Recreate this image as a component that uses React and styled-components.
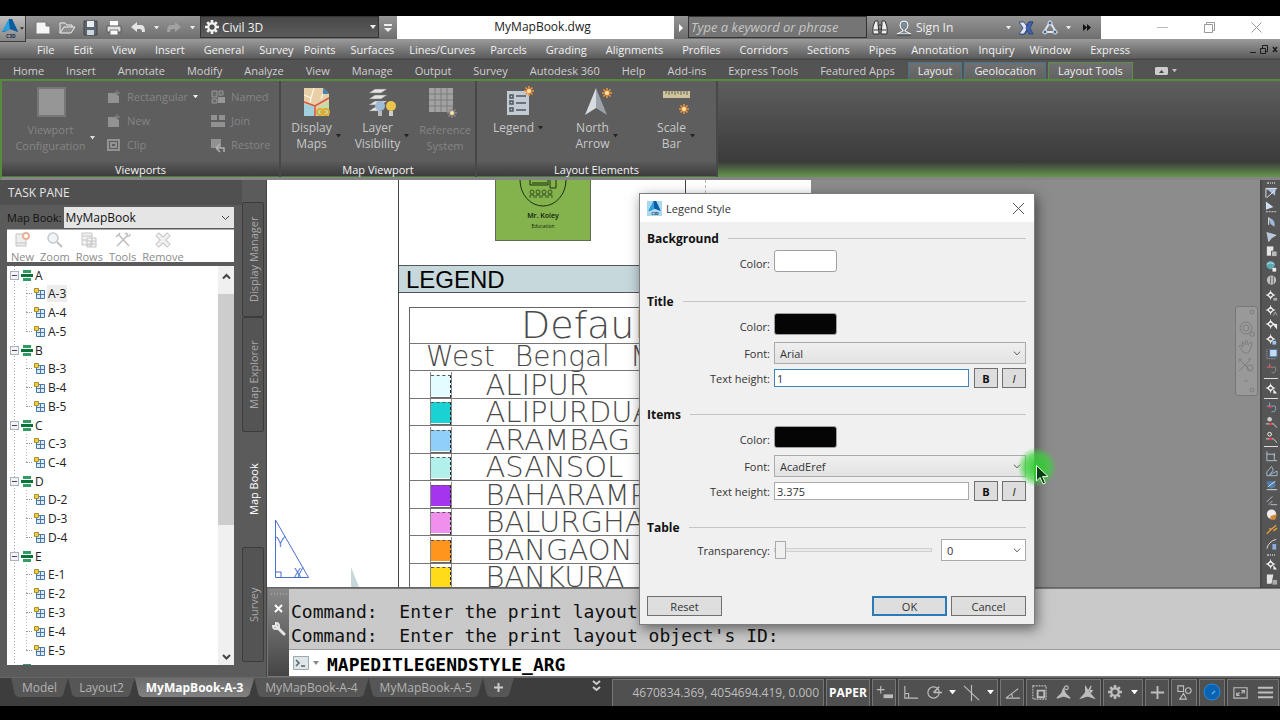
import React from 'react';
import styled, { createGlobalStyle, css } from 'styled-components';

const GlobalStyle = createGlobalStyle`
    * { box-sizing: border-box; }
    body {
        margin: 0;
        background: #000;
        font-family: "Open Sans", "Noto Sans", sans-serif;
        font-size: 12px;
        overflow: hidden;
    }
    button, input, select {
        font: inherit;
        color: inherit;
        margin: 0;
    }
    button {
        padding: 0;
        border: 0;
        background: none;
        white-space: nowrap;
    }
    svg { display: block; flex: none; }
`;

const Screen = styled.div`
    display: flex;
    flex-direction: column;
    height: 100vh;
    padding: 16px 0 14px;
    background: #000;
`;

/* ---------- title bar ---------- */

const TitleBar = styled.header`
    display: flex;
    height: 23px;
    background: linear-gradient(#959595, #6e6e6e);
    color: #fff;
`;

const AppButton = styled.button`
    display: flex;
    align-items: center;
    width: 26px;
    height: 26px;
    z-index: 1;
    background: linear-gradient(#bdbdbd, #878787);
    border-right: 1px solid #3c3c3c;
    border-bottom: 1px solid #3c3c3c;
`;

const QuickAccess = styled.div`
    display: flex;
    align-items: center;
    justify-content: space-between;
    width: 174px;
    padding: 0 5px 0 9px;
`;

const Workspace = styled.div`
    display: flex;
    align-items: center;
    width: 179px;
    height: 22px;
    padding: 0 2px 0 4px;
    gap: 3px;
    background: linear-gradient(#474747, #5c5c5c);
    border: 1px solid #333;
`;

const WorkspaceSelect = styled.select`
    flex: 1;
    appearance: none;
    border: 0;
    background: none;
    color: #f2f2f2;
`;

const BarButton = styled.button`
    display: flex;
    align-items: center;
    justify-content: center;
    width: ${props => props.$wide ? '18px' : '14px'};
`;

const FileName = styled.div`
    flex: 1;
    background: #fff;
    color: #222;
    text-align: center;
    line-height: 22px;
    padding-left: 14px;
`;

const SearchInput = styled.input`
    width: 179px;
    height: 22px;
    padding: 0 2px;
    border: 1px solid #333;
    background: #757575;
    font-style: italic;
    font-size: 13px;
    &::placeholder { color: #c6c6c6; opacity: 1; }
`;

const InfoCenter = styled.div`
    display: flex;
    align-items: center;
    width: 234px;
    padding: 0 5px;
    gap: 8px;
    color: #eee;
`;

const SignIn = styled.button`
    display: flex;
    align-items: center;
    gap: 4px;
    width: 106px;
`;

const WindowButtons = styled.div`
    display: flex;
    justify-content: space-around;
    align-items: center;
    width: 179px;
    padding-left: 38px;
    background: #fff;
    color: #999;
`;

/* ---------- menus and ribbon tabs ---------- */

const MenuBar = styled.nav`
    display: flex;
    align-items: center;
    height: 21px;
    padding: 0 2px 0 37px;
    background: linear-gradient(#9b9b9b, #5d5d5d 90%, #3c3c3c);
    color: #f1f1f1;
`;

const menuGaps = { small: '10px', medium: '15px', large: '19px' };

const MenuItem = styled.button`
    margin-right: ${props => menuGaps[props.$gap]};
    font-size: 11px;
`;

const DocButtons = styled.div`
    display: flex;
    gap: 3px;
    margin-left: auto;
    color: #1d1d1d;
`;

const TabBar = styled.nav`
    display: flex;
    align-items: flex-end;
    height: 19px;
    padding-left: 2px;
    background: #535353;
    color: #cfcfcf;
`;

const RibbonTab = styled.button`
    height: 17px;
    padding: 0 11px;
    font-size: 11px;
    line-height: 17px;
    ${props => props.$tone && css`
        margin-left: 2px;
        padding: 0 9px;
        line-height: 16px;
        color: #eee;
        border: 1px solid ${props.$tone};
        border-bottom: 0;
        background: linear-gradient(#707070, #626262);
    `}
`;

const RibbonToggle = styled.button`
    display: flex;
    align-items: center;
    height: 17px;
    margin-left: 22px;
    gap: 4px;
`;

const Ribbon = styled.section`
    display: flex;
    height: 101px;
    border-top: 2px solid #568a3d;
    border-left: 2px solid #568a3d;
    border-bottom: 3px solid #858585;
    background: linear-gradient(#5e5e5e, #3b3b3b 84%, #65974c);
    color: #c3c3c3;
`;

const Panel = styled.div`
    display: flex;
    flex-direction: column;
    width: ${props => props.$width};
    border-right: 2px solid #484848;
    background: #5e5e5e;
`;

const PanelBody = styled.div`
    display: flex;
    flex: 1;
    padding: 6px 0 0 2px;
`;

const PanelTitle = styled.div`
    height: 15px;
    font-size: 11px;
    line-height: 15px;
    text-align: center;
    color: #f3f3f3;
    background: linear-gradient(#5a5a5a, #3c3c3c);
    border-bottom: 1px solid #4b7b38;
`;

const BigButton = styled.button`
    display: flex;
    flex-direction: column;
    align-items: center;
    width: ${props => props.$width};
    gap: ${props => props.$low ? '5px' : '3px'};
    font-size: ${props => props.disabled ? '11px' : '12px'};
    line-height: 16px;
    color: ${props => props.disabled ? '#858585' : '#c8c8c8'};
    > svg { margin-right: ${props => props.disabled ? '8px' : '0'}; }
`;

const BigLabel = styled.span`
    display: flex;
    align-items: center;
    gap: 4px;
`;

const SmallColumn = styled.div`
    display: flex;
    flex-direction: column;
    width: ${props => props.$width};
`;

const SmallButton = styled.button`
    display: flex;
    align-items: center;
    gap: 5px;
    height: 24px;
    padding-bottom: 5px;
    font-size: 11px;
    color: #858585;
`;

/* ---------- workspace ---------- */

const Main = styled.main`
    display: flex;
    flex: 1;
    min-height: 0;
    background: #5b5b5b;
`;

const TaskPane = styled.aside`
    display: flex;
    flex-direction: column;
    width: 242px;
    padding: 0 8px 12px 7px;
`;

const PaneTitle = styled.h1`
    margin: 0 -8px 0 -7px;
    padding-left: 8px;
    height: 25px;
    font-size: 12px;
    font-weight: 400;
    line-height: 25px;
    color: #e6e6e6;
    background: #505050;
`;

const BookRow = styled.div`
    display: flex;
    align-items: center;
    height: 24px;
    gap: 2px;
    color: #111;
    white-space: nowrap;
    label { font-size: 11px; }
`;

const BookSelectBox = styled.div`
    display: flex;
    align-items: center;
    flex: 1;
    height: 21px;
    padding: 0 4px 0 2px;
    background: #e5e5e5;
`;

const PlainSelect = styled.select`
    flex: 1;
    min-width: 0;
    appearance: none;
    border: 0;
    outline: 0;
    padding: 0;
    background: none;
`;

const PaneTools = styled.div`
    display: flex;
    gap: 6px;
    height: 33px;
    padding: 2px 4px 0;
    background: #fff;
    border-top: 1px solid #aaa;
    color: #8b8b8b;
`;

const PaneTool = styled.button`
    display: flex;
    flex-direction: column;
    align-items: center;
    gap: 2px;
    font-size: 11px;
    line-height: 14px;
    color: #8b8b8b;
`;

const TreeBox = styled.div`
    display: flex;
    flex: 1;
    min-height: 0;
    margin-top: 4px;
    background: #fff;
    overflow: hidden;
`;

const Tree = styled.ul`
    flex: 1;
    margin: 0;
    padding: 0 0 0 3px;
    list-style: none;
    color: #222;
    background: repeating-linear-gradient(#aaa 0 1px, transparent 1px 3px) 7px 0 / 1px 100% no-repeat;
`;

const TreeHead = styled.div`
    display: flex;
    align-items: center;
    gap: 2px;
    height: 18px;
`;

const Expander = styled.button`
    display: grid;
    place-items: center;
    width: 9px;
    height: 9px;
    border: 1px solid #a9b0bf;
    background: #f1f3f7;
`;

const Leaves = styled.ul`
    margin: 0 0 0 16px;
    padding: 0;
    list-style: none;
    background: repeating-linear-gradient(#bbb 0 1px, transparent 1px 3px) 0 0 / 1px calc(100% - 9px) no-repeat;
`;

const Leaf = styled.li`
    display: flex;
    align-items: center;
    height: 19px;
    gap: 2px;
    &::before {
        content: "";
        width: 6px;
        border-top: 1px dotted #999;
    }
`;

const LeafName = styled.button`
    padding: 0 1px;
    line-height: 17px;
    background: ${props => props.$selected ? '#ededed' : 'none'};
`;

const Scrollbar = styled.div`
    display: flex;
    flex-direction: column;
    align-items: center;
    width: 16px;
    background: #f0f0f0;
    color: #444;
`;

const ScrollButton = styled.button`
    height: 28px;
    padding-bottom: 8px;
    &:last-child { margin-top: auto; height: 18px; padding: 0; }
`;

const Thumb = styled.div`
    width: 100%;
    height: 58%;
    background: #cdcdcd;
`;

const SideTabs = styled.div`
    display: flex;
    flex-direction: column;
    width: 25px;
    padding: 22px 2px 15px 0;
    border-right: 1px solid #444;
`;

const SideTab = styled.button`
    flex: 1;
    writing-mode: vertical-rl;
    transform: rotate(180deg);
    border: 1px solid ${props => props.$active ? 'transparent' : '#3c3c3c'};
    border-radius: 2px;
    font-size: 11px;
    color: ${props => props.$active ? '#fff' : '#a8a8a8'};
    background: ${props => props.$active ? 'none' : '#545454'};
`;

const Work = styled.div`
    display: flex;
    flex: 1;
    flex-direction: column;
    min-width: 0;
`;

const CanvasRow = styled.div`
    display: flex;
    flex: 1;
    min-height: 0;
`;

const Canvas = styled.div`
    position: relative;
    flex: 1;
    background: #8c8c8c;
    overflow: hidden;
    border-bottom: 1px solid #666;
`;

const Sheet = styled.div`
    display: flex;
    width: 544px;
    height: 100%;
    background: #fff;
    overflow: hidden;
`;

const SheetMargin = styled.div`
    position: relative;
    width: 132px;
    border-right: 1px solid #444;
`;

const SheetBody = styled.div`
    flex: 1;
    height: 100%;
    overflow: hidden;
`;

const SheetTop = styled.div`
    display: flex;
    height: 85px;
    padding-left: 96px;
`;

const Stamp = styled.div`
    display: flex;
    flex-direction: column;
    align-items: center;
    width: 96px;
    height: 61px;
    background: #84b24d;
    border: 1px solid #5f6b55;
    border-top: 0;
    line-height: 11px;
    color: #10200a;
`;

const StampName = styled.span`
    margin-top: 2px;
    font-size: 7px;
    font-weight: 600;
`;

const StampRole = styled.span`
    font-size: 5px;
`;

const Guide = styled.div`
    width: 20px;
    height: 100%;
    margin-left: ${props => props.$far ? '0' : '94px'};
    border-left: 1px ${props => props.$far ? 'dashed #bbb' : 'solid #444'};
`;

const LegendBand = styled.h2`
    height: 28px;
    margin: 0 0 14px;
    padding-left: 7px;
    border: 1px solid #555;
    border-left: 0;
    background: #c6d8dc;
    font-family: "Liberation Sans", Arial, sans-serif;
    font-size: 24px;
    font-weight: 400;
    line-height: 28px;
    color: #000;
`;

const LegendTable = styled.table`
    width: 380px;
    margin-left: 10px;
    border-collapse: collapse;
    border: 1px solid #666;
    font-family: "DejaVu Sans", sans-serif;
    font-weight: 200;
    font-size: 29px;
    line-height: 26px;
    color: #4a4a4a;
    white-space: nowrap;
    th, td { padding: 0; }
`;

const LegendTitle = styled.th`
    height: 36px;
    font-size: 38px;
    font-weight: 200;
    line-height: 35px;
    text-align: left;
    && { padding-left: 111px; }
`;

const LegendSub = styled.th`
    font-size: 28px;
    font-weight: 200;
    text-align: left;
    && { padding-left: 16px; }
`;

const SubWords = styled.span`
    display: flex;
    gap: 20px;
`;

const LegendRow = styled.tr`
    height: ${props => props.$tall ? '28px' : '27px'};
    border-top: 1px solid #777;
`;

const SwatchCell = styled.td`
    width: 76px;
    && { padding-left: 20px; }
`;

const Swatch = styled.div`
    width: 22px;
    height: 26px;
    padding: 3px 0 2px;
    border-left: 1px solid #8a8a8a;
    border-right: 1px solid #8a8a8a;
    background: ${props => props.$color} content-box;
    &::after {
        content: "";
        display: block;
        height: 100%;
        border-top: 1px dashed #555;
        border-right: 1px dashed #222;
        border-bottom: 1px solid #666;
    }
`;

const CoordMark = styled.svg`
    position: absolute;
    left: 7px;
    bottom: 8px;
`;

const PaperCorner = styled.svg`
    position: absolute;
    right: 39px;
    bottom: 0;
`;

const NavBar = styled.div`
    position: absolute;
    right: 2px;
    top: 126px;
    width: 23px;
    height: 90px;
    border: 1px solid #777;
    border-radius: 3px;
    background: #999;
    color: #808080;
    display: flex;
    flex-direction: column;
    align-items: center;
    justify-content: space-between;
    padding: 2px 0;
`;

const ToolStrip = styled.div`
    display: flex;
    flex-direction: column;
    width: 20px;
    background: #555;
    border-left: 2px solid #494949;
    border-bottom: 1px solid #484848;
`;

const StripButton = styled.button`
    display: grid;
    place-items: center;
    flex: 1;
    min-height: 0;
    overflow: hidden;
`;

const StripLine = styled.div`
    height: 1px;
    margin: 2px 2px;
    background: #ddd;
`;

const Grip = styled.div`
    height: 2px;
    margin: 2px 5px;
    border-top: 1px dotted #aaa;
    border-bottom: 1px dotted #aaa;
`;

/* ---------- command line ---------- */

const CommandWindow = styled.section`
    display: flex;
    height: 89px;
    border: 1px solid #777;
    border-right: 0;
`;

const CommandSide = styled.div`
    display: flex;
    flex-direction: column;
    align-items: center;
    gap: 9px;
    width: 21px;
    padding-top: 4px;
    background: linear-gradient(#888, #454545);
    color: #fff;
`;

const CommandBody = styled.div`
    flex: 1;
    display: flex;
    flex-direction: column;
    font-family: "DejaVu Sans Mono", "Liberation Mono", monospace;
    font-size: 18px;
    color: #101010;
`;

const History = styled.div`
    flex: 1;
    padding: 11px 2px 0;
    background: #c9c9c9;
    line-height: 24px;
    white-space: pre;
    border-bottom: 1px solid #999;
`;

const Prompt = styled.div`
    display: flex;
    align-items: center;
    gap: 4px;
    height: 26px;
    padding-left: 4px;
    background: #fff;
`;

const PromptInput = styled.input`
    flex: 1;
    height: 26px;
    padding: 2px 4px 0;
    border: 0;
    outline: 0;
    background: none;
    font-weight: 700;
    color: #000;
`;

/* ---------- bottom bar ---------- */

const BottomBar = styled.footer`
    display: flex;
    height: 29px;
    background: #3d3d3d;
    border-top: 1px solid #666;
    color: #a9a9a9;
`;

const LayoutTabs = styled.div`
    display: flex;
    flex: 1;
    align-items: flex-start;
    padding-left: 11px;
`;

const LayoutTab = styled.button`
    height: 19px;
    padding: 0 11px;
    line-height: 19px;
    font-size: 12px;
    background: ${props => props.$active ? 'linear-gradient(#6d6d6d, #818181)' : '#565656'};
    color: ${props => props.$active ? '#fff' : '#b2b2b2'};
    font-weight: ${props => props.$active ? 700 : 400};
    clip-path: polygon(0 0, 100% 0, calc(100% - 5px) 90%, calc(100% - 8px) 100%, 7px 100%, 4px 90%);
`;

const MoreTabs = styled.button`
    margin: 2px 10px 0 auto;
`;

const StatusCell = styled.div`
    display: flex;
    align-items: center;
    justify-content: space-around;
    width: ${props => props.$width};
    margin: 1px 1px 0;
    padding-bottom: 2px;
    border: 1px solid #777;
    border-bottom: 0;
    background: #505050;
    color: ${props => props.$bright ? '#fff' : '#bdbdbd'};
    font-weight: ${props => props.$bright ? 700 : 400};
`;

const Coordinates = styled(StatusCell)`
    justify-content: flex-end;
    padding-right: 4px;
`;

/* ---------- dialog ---------- */

const Dialog = styled.div`
    position: absolute;
    left: 639px;
    top: 193px;
    width: 396px;
    border: 1px solid #7d7d7d;
    background: #f0f0f0;
    box-shadow: 2px 4px 12px rgba(0, 0, 0, 0.5);
    font-size: 11px;
    color: #333;
`;

const DialogTitle = styled.div`
    display: flex;
    align-items: center;
    gap: 4px;
    height: 28px;
    padding: 0 9px 0 7px;
    background: #fff;
`;

const CloseButton = styled.button`
    margin-left: auto;
`;

const DialogBody = styled.div`
    padding: 6px 8px 8px 7px;
`;

const Section = styled.fieldset`
    margin: 0;
    padding: 0 0 12px;
    border: 0;
    min-width: 0;
`;

const SectionTitle = styled.div`
    display: flex;
    align-items: center;
    gap: 9px;
    height: 20px;
    margin-bottom: 2px;
    font-size: 12px;
    font-weight: 700;
    color: #111;
    &::after {
        content: "";
        flex: 1;
        border-top: 1px solid #c4c4c4;
    }
`;

const Field = styled.div`
    display: flex;
    align-items: center;
    gap: 4px;
    height: 22px;
    margin-bottom: ${props => props.$swatch ? '7px' : '3px'};
    label { padding-top: ${props => props.$swatch ? '4px' : '0'}; }
`;

const FieldLabel = styled.label`
    width: 123px;
    text-align: right;
`;

const ColorButton = styled.button`
    width: 63px;
    height: 22px;
    border: 1px solid #a0a0a0;
    border-radius: 3px;
    background: ${props => props.$color};
`;

const Combo = styled.div`
    display: flex;
    align-items: center;
    flex: ${props => props.$small ? 'none' : 1};
    width: ${props => props.$small ? '85px' : 'auto'};
    height: 22px;
    margin-left: ${props => props.$small ? '5px' : 0};
    padding: 0 4px 0 5px;
    border: 1px solid #aaa;
    background: ${props => props.$small ? '#fff' : 'linear-gradient(#efefef, #e3e3e3)'};
`;

const HeightInput = styled.input`
    flex: 1;
    min-width: 0;
    height: 18px;
    padding: 0 2px;
    border: 1px solid ${props => props.$focused ? '#3b86bd' : '#aaa'};
    outline: 0;
    background: #fff;
`;

const StyleButton = styled.button`
    width: 24px;
    height: 20px;
    margin-left: ${props => props.$first ? '1px' : 0};
    border: 1px solid #707070;
    background: #ddd;
    font-weight: ${props => props.$first ? 700 : 400};
    font-style: ${props => props.$first ? 'normal' : 'italic'};
    color: #111;
`;

const Range = styled.input`
    flex: 1;
    min-width: 0;
    height: 18px;
    appearance: none;
    background: none;
    &::-webkit-slider-runnable-track {
        height: 4px;
        border: 1px solid #d0d0d0;
        background: #e9e9e9;
    }
    &::-webkit-slider-thumb {
        appearance: none;
        width: 11px;
        height: 18px;
        margin-top: -8px;
        border: 1px solid #aaa;
        background: #f0f0f0;
    }
`;

const Actions = styled.div`
    display: flex;
    gap: 4px;
    margin-top: 20px;
`;

const ActionButton = styled.button`
    width: 75px;
    height: 20px;
    border: ${props => props.$primary ? '2px solid #2a7ab8' : '1px solid #707070'};
    background: #dedede;
    &:first-child { margin-right: auto; }
`;

const Pointer = styled.div`
    position: absolute;
    left: 1017px;
    top: 447px;
    width: 40px;
    height: 40px;
    border-radius: 50%;
    background: radial-gradient(rgba(50, 205, 50, 0.9) 15%, rgba(60, 210, 60, 0.7) 45%, rgba(60, 210, 60, 0) 70%);
    pointer-events: none;
    svg { margin: 18px 0 0 19px; overflow: visible; }
`;

/* ---------- drawings ---------- */

const Caret = ({ color = '#eee', size = 6 }) => (
    <svg width={size} height={size / 2 + 1} viewBox="0 0 6 4"><path d="M0 0H6L3 4Z" fill={color} /></svg>
);

const Chevron = ({ up, color = '#444', size = 9 }) => (
    <svg width={size} height={size} viewBox="0 0 9 9" fill="none" stroke={color} strokeWidth={up === undefined ? 1 : 2}>
        <path d={up ? 'M1 6.500L4.500 3L8 6.500' : 'M1 3L4.500 6.500L8 3'} />
    </svg>
);

const Logo = ({ size = 20, boxed }) => (
    <svg width={size} height={size} viewBox="0 0 20 20">
        {boxed && <path d="M0 0H20V20H0Z" fill="#a8d8ef" />}
        <path d="M9 0H12L18 13L13 11L10 10L4 13H2Z" fill="#0b68ad" />
        <path d="M9 0L2 13L10 10Z" fill="#2ba1df" />
        <path d="M9 0L10 10L18 13L12 0Z" fill="#0c5b9e" />
        <text x="6" y="19" fontSize="5" fontWeight="700" fill="#14304a">C3D</text>
    </svg>
);

const Spark = ({ x, y, color = '#f0953c' }) => (
    <g transform={`translate(${x} ${y})`} stroke={color} strokeWidth="1.500">
        <path d="M-5 0H5M0 -5V5M-3.500 -3.500L3.500 3.500M-3.500 3.500L3.500 -3.500" />
        <circle r="2" fill="#ffe3a0" stroke="none" />
    </g>
);

const quickIcons = {
    new: <path d="M1 2H11L15 6V14H1Z M11 2V6H15" fill="#f5f5f5" stroke="#777" />,
    open: <path d="M1 13V3H6L8 5H13V7M1 13L5 7H16L12 13Z" fill="#8e8e8e" stroke="#eee" />,
    save: <><path d="M2 1H15V15H2Z" fill="#5d6670" stroke="#444" /><path d="M5 1H12V7H5Z" fill="#e9eef2" /><path d="M5 10H12V15H5Z" fill="#ccd6de" /></>,
    print: <><path d="M4 1H12V6H4Z" fill="#fff" /><path d="M1 6H15V12H1Z" fill="#e2e2e2" stroke="#555" /><path d="M4 10H12V15H4Z" fill="#fafafa" stroke="#777" /></>,
    undo: <path d="M1 7L7 2V5H12Q15 6 15 12H12Q12 9 10 9H7V12Z" fill="#e4e4e4" />,
    redo: <path d="M15 7L9 2V5H4Q1 6 1 12H4Q4 9 6 9H9V12Z" fill="#a2a2a2" />,
};

const QuickIcon = ({ name }) => <svg width="16" height="16" viewBox="0 0 16 16">{quickIcons[name]}</svg>;

const Gear = ({ size = 14, color = '#f2f2f2', hole = '#4c4c4c' }) => (
    <svg width={size} height={size} viewBox="-8 -8 16 16">
        <path d="M0 -8V8M-8 0H8M-5.500 -5.500L5.500 5.500M-5.500 5.500L5.500 -5.500" stroke={color} strokeWidth="3" />
        <circle r="5.500" fill={color} />
        <circle r="3" fill={hole} />
    </svg>
);

const smallIcons = {
    page: <><path d="M2 4H9L13 7V14H2Z" fill="#929292" /><path d="M11 1V7M8 4H14" stroke="#888" /></>,
    clip: <path d="M2 3H13V13H2ZM5 6H10V10H5Z" fill="none" stroke="#929292" strokeWidth="2" />,
    named: <><path d="M2 2H7V8H2ZM2 10H7V14H2ZM9 2H13V6H9Z" fill="#6a6a6a" stroke="#979797" /><path d="M8 8H15V14H8Z" fill="#979797" /></>,
    join: <path d="M1 2H7V7H1ZM9 2H15V7H9ZM1 9H15V14H1Z" fill="#919191" />,
    restore: <><path d="M1 2H11V11H1Z" fill="#929292" /><path d="M6 11H14V15M6 11L10 7M6 11L10 15" fill="none" stroke="#b0b0b0" strokeWidth="1.500" /></>,
};

const SmallIcon = ({ name }) => <svg width="16" height="16" viewBox="0 0 16 16">{smallIcons[name]}</svg>;

const bigIcons = {
    viewport: <path d="M2 1H29V29H2Z" fill="#969696" stroke="#777" strokeWidth="2" />,
    maps: (
        <>
            <path d="M3 1H22L28 7V29H3Z" fill="#e8cfa6" />
            <path d="M3 17L12 19L15 29H3Z" fill="#9fd0dc" />
            <path d="M18 19L28 15V29H14Z" fill="#c6dca6" />
            <path d="M22 1V7H28Z" fill="#3f82bd" />
            <path d="M3 8L10 11L13 1M10 11L9 16M20 12L22 7" fill="none" stroke="#fff" />
            <path d="M3 15L14 19L28 11M14 19V29" fill="none" stroke="#cf5546" strokeWidth="1.500" />
            <path d="M16 25a3 3 0 1 1 6 0a3 3 0 1 1 -6 0M22 25a3 3 0 1 0 6 0a3 3 0 1 0 -6 0M19 25H25" fill="none" stroke="#dfab35" strokeWidth="2" />
        </>
    ),
    layers: (
        <>
            <path d="M8 2H20L14 6H2ZM8 8H20L14 12H2ZM8 14H20L14 18H2ZM8 20H15L12 24H2Z" fill="#e4e4e4" stroke="#777" strokeWidth=".5" />
            <circle cx="13" cy="19" r="5" fill="#9fbbd6" /><path d="M11 24H15V29H11Z" fill="#bbb" />
            <circle cx="24" cy="19" r="5" fill="#ecc64c" /><path d="M22 24H26V29H22Z" fill="#ccc" />
        </>
    ),
    grid: (
        <>
            <path d="M3 1H27V25H3Z" fill="#a2a2a2" />
            <path d="M9 1V25M15 1V25M21 1V25M3 7H27M3 13H27M3 19H27" stroke="#7d7d7d" />
            <Spark x={26} y={26} color="#8b8b8b" />
        </>
    ),
    legend: (
        <>
            <path d="M4 4H26V28H4Z" fill="#c2cbd3" />
            <path d="M7 8H10V11H7ZM7 14H10V17H7ZM7 21H10V24H7ZM13 9H23M13 16H23M13 23H23" fill="none" stroke="#4d565e" strokeWidth="1.500" />
            <Spark x={26} y={4} />
        </>
    ),
    north: (
        <>
            <path d="M14 1L25 28L14 21Z" fill="#9ba2aa" />
            <path d="M14 1L3 28L14 21Z" fill="#d7dce1" />
            <Spark x={25} y={6} />
        </>
    ),
    scale: (
        <>
            <path d="M2 4H29V11H2Z" fill="#cfc39b" />
            <path d="M5 4V7M8 4V8M11 4V7M14 4V8M17 4V7M20 4V8M23 4V7M26 4V8" stroke="#665" />
            <Spark x={23} y={22} />
        </>
    ),
};

const BigIcon = ({ name }) => <svg width="31" height="30" viewBox="0 0 31 30" overflow="visible">{bigIcons[name]}</svg>;

const paneIcons = {
    New: <><path d="M2 2H12V14H2ZM2 11H12" fill="#eee" stroke="#c4c4c4" /><circle cx="12" cy="4" r="3" fill="#fff" stroke="#eab29a" strokeWidth="2" /></>,
    Zoom: <><circle cx="6" cy="6" r="5" fill="#f1f5f7" stroke="#c3cace" strokeWidth="1.500" /><path d="M10 10L15 15" stroke="#c0c0c0" strokeWidth="2" /></>,
    Rows: <path d="M1 1H11V13H1ZM1 4H11M1 8H6M6 6H15V15H6ZM6 9H15M6 12H15M10 9V15" fill="#f1f3f5" stroke="#c6c6c6" />,
    Tools: <path d="M2 14L12 4M4 3L14 14M1 5L5 1M10 2Q13 0 12 4Q15 5 15 2" fill="none" stroke="#bebebe" strokeWidth="1.500" />,
    Remove: <><path d="M2 2L14 14M14 2L2 14" stroke="#c4c4c4" strokeWidth="5" /><path d="M2.500 2.500L13.500 13.500M13.500 2.500L2.500 13.500" stroke="#f2f2f2" strokeWidth="3" /></>,
};

const BookIcon = () => (
    <svg width="12" height="11" viewBox="0 0 12 11">
        <path d="M2 0H10V3H2ZM2 8H10V11H2Z" fill="#339b61" />
        <path d="M0 4H12V7H0Z" fill="#08743a" />
    </svg>
);

const MapIcon = () => (
    <svg width="11" height="11" viewBox="0 0 11 11">
        <path d="M2.500 2.500H10.500V10.500H2.500ZM6.500 2.500V10.500M2.500 6.500H10.500" fill="#dcebfa" stroke="#4b78ab" />
        <path d="M.5.5H4.500V4.500H.5Z" fill="#f1cf3d" stroke="#a88f2c" />
    </svg>
);

const node = <path d="M5 1V4M5 8V11M0 6H3M7 6H10" stroke="#ddd" />;
const diamond = <path d="M5 3L8 6L5 9L2 6Z" fill="none" stroke="#f0f0f0" strokeWidth="1.500" />;
const stripIcons = [
    <><path d="M0 1H10V9Z" fill="#a9c1df" /><path d="M0 1H12M1 11L11 2M0 11V1" stroke="#e8edf4" /></>,
    <><path d="M0 0L8 6L0 9Z" fill="#d2deef" /><path d="M0 11H12" stroke="#ddd" strokeDasharray="2 1" /></>,
    <><path d="M3 1Q11 4 9 11L5 8Z" fill="#9fb9dc" /><path d="M3 1V9" stroke="#fff" /></>,
    <path d="M1 1L11 4L6 7L3 11Z" fill="#b8c8df" stroke="#eee" strokeWidth=".5" />,
    <><path d="M1 1H8V11H1Z" fill="#e5e5e5" /><path d="M6 6H12V12H6Z" fill="#bbb" stroke="#555" /></>,
    <><circle cx="5" cy="5" r="4.500" fill="#60a9b4" /><path d="M1 4Q5 1 9 4" stroke="#bce5e9" fill="none" /><path d="M7 8H11V12H7Z" fill="#eee" /></>,
    <><circle cx="6" cy="6" r="5" fill="#bfbfbf" /><path d="M5 2V10M8 2V10" stroke="#666" /></>,
    <>{node}{diamond}<path d="M8 9H12V12H8Z" fill="#aaa" /></>,
    <>{node}{diamond}<path d="M8 12L10 8L12 12" stroke="#aaa" fill="none" /></>,
    <>{node}{diamond}<path d="M7 6H12V12Z" fill="#eee" /></>,
    <>{node}{diamond}<path d="M7 8H11V12H7Z" fill="#9ec5ea" /></>,
    <><path d="M4 1H12V9H4Z" fill="#c6daf0" stroke="#466da0" /><path d="M1 1V11H11" fill="none" stroke="#aaa" strokeDasharray="1 1" /></>,
    <><path d="M4 1V5M1 5H10Q12 8 9 11H6" fill="none" stroke="#9a868c" /><path d="M2 5H6" stroke="#d8485a" strokeWidth="1.500" /></>,
    'line',
    <>{node}{diamond}<path d="M8 7V12H12Z" fill="#eee" /></>,
    'line',
    <><path d="M4 1V7M1 5H10Q12 8 9 11H6" fill="none" stroke="#7bb1cf" /><path d="M3 6H6" stroke="#ee3549" strokeWidth="2" /></>,
    <><circle cx="4" cy="3" r="2.500" fill="#ccc" /><path d="M0 8H8L12 12" stroke="#ddd" fill="none" /><circle cx="5" cy="8" r="1.500" fill="#ee3549" /></>,
    <><circle cx="4" cy="3" r="2" fill="none" stroke="#fff" /><path d="M0 8H8L12 12" stroke="#ddd" fill="none" /><circle cx="5" cy="8" r="1.500" fill="#ee3549" /></>,
    'line',
    <path d="M1 1V11H12M1 4H9V11M9 3V6" fill="none" stroke="#b3c6d8" />,
    <path d="M1 11V7L6 1L8 5L4 10L12 6V11Z" fill="none" stroke="#a6bed4" />,
    <><path d="M1 2H10V8L5 10L1 5Z" fill="#517eae" /><path d="M1 11H12M2 8L10 2" stroke="#dde6ee" /></>,
    <path d="M1 8L7 2M3 11L7 7M5 11H12" fill="none" stroke="#b7c7d4" />,
    <><circle cx="6" cy="5" r="5" fill="#eee" /><path d="M5 7L12 5L10 11H5Z" fill="#d58a36" /></>,
    <path d="M1 11L5 7L4 5M5 7L11 2M8 8L12 5" stroke="#e79b3f" strokeWidth="1.500" fill="none" />,
    <><path d="M1 11Q3 3 11 1" stroke="#e5e5e5" fill="none" /><path d="M7 6H11V12H7Z" fill="#8baee1" /></>,
    'grip',
    <>{node}{diamond}<path d="M8 7V12H12Z" fill="#eee" /></>,
    <><path d="M1 1H8L6 11H1Z" fill="#e3e3e3" /><path d="M7 7H12V12H7Z" fill="#aaa" /></>,
];

const Strip = () => (
    <ToolStrip>
        <Grip />
        {stripIcons.map((icon, i) => {
            if (icon === 'line') return <StripLine key={i} />;
            if (icon === 'grip') return <Grip key={i} />;
            return (
                <StripButton key={i}>
                    <svg width="13" height="13" viewBox="-1 0 14 13">{icon}</svg>
                </StripButton>
            );
        })}
    </ToolStrip>
);

const statusIcons = {
    infer: <><path d="M0 5H8M4 1V9" /><path d="M7 10H17V14H7Z" fill="currentColor" stroke="none" /></>,
    ortho: <path d="M2 1V14H16M2 9H6V14" />,
    polar: <><circle cx="7" cy="8" r="6" /><path d="M7 8H16M7 8L13 2" strokeWidth="1.500" /></>,
    iso: <path d="M0 1L16 16M8 0V17" />,
    track: <path d="M1 14H16M1 14L14 4M7 9L8 13" />,
    snap: <><path d="M1 1H15V15H1Z" strokeDasharray="2 1" /><path d="M6 6H13V13H6Z" strokeWidth="2" /></>,
    person: <><path d="M8 4L10 9L15 14L9 12H7L1 14L6 9Z" fill="currentColor" /><circle cx="11" cy="3" r="2" /></>,
    bolt: <path d="M6 2L9 7L15 14L9 12H7L1 14L6 8ZM12 1L9 6H13L10 10" fill="currentColor" />,
    plus: <path d="M8 1V15M1 8H15" strokeWidth="2" />,
    shapes: <><path d="M1 1H7V7H1ZM3 15L7 9L10 15Z" /><circle cx="12" cy="6" r="3" /></>,
    full: <path d="M1 3H15V14H1ZM4 11L7 8M4 8V11H7M12 6L9 9M9 6H12V9" />,
    menu: <path d="M0 3H16M0 8H16M0 13H16" strokeWidth="2" />,
};

const StatusIcon = ({ name }) => (
    <button aria-label={name}>
        <svg width="17" height="17" viewBox="-1 -1 18 18" fill="none" stroke="currentColor" strokeWidth="1.200">{statusIcons[name]}</svg>
    </button>
);

/* ---------- data ---------- */

const menus = [
    ['File', 'large'], ['Edit', 'large'], ['View', 'large'], ['Insert', 'large'], ['General', 'medium'],
    ['Survey', 'small'], ['Points', 'medium'], ['Surfaces', 'medium'], ['Lines/Curves', 'medium'], ['Parcels', 'large'],
    ['Grading', 'large'], ['Alignments', 'large'], ['Profiles', 'large'], ['Corridors', 'large'], ['Sections', 'large'],
    ['Pipes', 'medium'], ['Annotation', 'small'], ['Inquiry', 'medium'], ['Window', 'large'], ['Express', 'large'],
];

const tabs = [
    'Home', 'Insert', 'Annotate', 'Modify', 'Analyze', 'View', 'Manage', 'Output', 'Survey',
    'Autodesk 360', 'Help', 'Add-ins', 'Express Tools', 'Featured Apps',
];

const books = [
    { name: 'A', maps: ['A-3', 'A-4', 'A-5'] },
    { name: 'B', maps: ['B-3', 'B-4', 'B-5'] },
    { name: 'C', maps: ['C-3', 'C-4'] },
    { name: 'D', maps: ['D-2', 'D-3', 'D-4'] },
    { name: 'E', maps: ['E-1', 'E-2', 'E-3', 'E-4', 'E-5'] },
    { name: 'F', maps: [] },
];

const legend = [
    ['ALIPUR', '#e1fdff'], ['ALIPURDUAR', '#1ad2d2'], ['ARAMBAG', '#90d0f8'], ['ASANSOL', '#b2f0ec'],
    ['BAHARAMPUR', '#a335ee'], ['BALURGHAT', '#ee90ec'], ['BANGAON', '#ff951c'], ['BANKURA', '#ffdb19'],
];

/* ---------- parts ---------- */

const Header = () => (
    <TitleBar>
        <AppButton aria-label="Application menu"><Logo size={20} /><Caret color="#333" size={4} /></AppButton>
        <QuickAccess>
            <button aria-label="New"><QuickIcon name="new" /></button>
            <button aria-label="Open"><QuickIcon name="open" /></button>
            <button aria-label="Save"><QuickIcon name="save" /></button>
            <button aria-label="Print"><QuickIcon name="print" /></button>
            <button aria-label="Undo"><QuickIcon name="undo" /></button>
            <Caret size={5} />
            <button aria-label="Redo"><QuickIcon name="redo" /></button>
            <Caret size={5} />
        </QuickAccess>
        <Workspace>
            <Gear />
            <WorkspaceSelect aria-label="Workspace"><option>Civil 3D</option></WorkspaceSelect>
            <Caret />
        </Workspace>
        <BarButton $wide aria-label="Customize">
            <svg width="8" height="8" viewBox="0 0 8 8"><path d="M0 0H8V2H0ZM0 4H8L4 8Z" fill="#eee" /></svg>
        </BarButton>
        <FileName>MyMapBook.dwg</FileName>
        <BarButton aria-label="Expand search">
            <svg width="4" height="8" viewBox="0 0 4 8"><path d="M0 0L4 4L0 8Z" fill="#fff" /></svg>
        </BarButton>
        <SearchInput aria-label="Search" placeholder="Type a keyword or phrase" />
        <InfoCenter>
            <button aria-label="Find">
                <svg width="16" height="15" viewBox="0 0 16 15" fill="#eee" stroke="#333">
                    <path d="M3 1H6V4L7 14H1V7ZM13 1H10V4L9 14H15V7Z" /><path d="M7 5H9V9H7Z" /><path d="M2 10H6M10 10H14" />
                </svg>
            </button>
            <SignIn>
                <svg width="16" height="16" viewBox="0 0 16 16" fill="#7b8995" stroke="#fff">
                    <path d="M4 5Q4 1 8 1Q12 1 12 5Q12 9 9 10V11L15 14H1L7 11V10Q4 9 4 5Z" /><path d="M1 15H15" stroke="#333" />
                </svg>
                Sign In
            </SignIn>
            <Caret size={5} />
            <button aria-label="Exchange">
                <svg width="15" height="14" viewBox="0 0 15 14">
                    <path d="M10 1H14L6 13H1Z" fill="#3d64b5" stroke="#273c74" strokeWidth=".8" />
                    <path d="M0 1H5L9 7L5 13H0L4 7Z" fill="#dce4f6" stroke="#273c74" strokeWidth=".8" />
                    <path d="M14 1H10L7 7L10 13H14L11 7Z" fill="#3d64b5" stroke="#273c74" strokeWidth=".8" />
                </svg>
            </button>
            <button aria-label="Autodesk 360">
                <svg width="16" height="15" viewBox="0 0 16 15" fill="none" stroke="#dbe4ef" strokeWidth="2">
                    <path d="M8 2L14 12H2Z" /><circle cx="8" cy="3" r="2" fill="#47648e" strokeWidth="1" />
                    <circle cx="3" cy="12" r="2" fill="#47648e" strokeWidth="1" /><circle cx="13" cy="12" r="2" fill="#47648e" strokeWidth="1" />
                </svg>
            </button>
            <Caret size={5} />
            <BarButton $wide aria-label="More">
                <svg width="8" height="7" viewBox="0 0 8 7"><path d="M0 0L4 3.500L0 7ZM4 0L8 3.500L4 7Z" fill="#111" /></svg>
            </BarButton>
        </InfoCenter>
        <WindowButtons>
            <button aria-label="Minimize"><svg width="11" height="11" viewBox="0 0 11 11"><path d="M0 5.500H11" stroke="#bbb" /></svg></button>
            <button aria-label="Restore"><svg width="11" height="11" viewBox="0 0 11 11" fill="none" stroke="#999"><path d="M.5 2.500H8.500V10.500H.5ZM2.500 2.500V.5H10.500V8.500H8.500" /></svg></button>
            <button aria-label="Close"><svg width="11" height="11" viewBox="0 0 11 11" stroke="#999"><path d="M.5.5L10.500 10.500M10.500.5L.5 10.500" /></svg></button>
        </WindowButtons>
    </TitleBar>
);

const Big = ({ icon, lines, width, disabled, low, caret = 'last' }) => (
    <BigButton $width={width} $low={low} disabled={disabled}>
        <BigIcon name={icon} />
        <BigLabel>
            <span>{lines.map(line => <div key={line}>{line}</div>)}</span>
            {caret !== 'none' && <Caret color={disabled ? '#ddd' : '#222'} size={5} />}
        </BigLabel>
    </BigButton>
);

const RibbonArea = () => (
    <Ribbon>
        <Panel $width="279px">
            <PanelBody>
                <Big icon="viewport" lines={['Viewport', 'Configuration']} width="102px" disabled low />
                <SmallColumn $width="104px">
                    <SmallButton disabled><SmallIcon name="page" />Rectangular<Caret size={5} /></SmallButton>
                    <SmallButton disabled><SmallIcon name="page" />New</SmallButton>
                    <SmallButton disabled><SmallIcon name="clip" />Clip</SmallButton>
                </SmallColumn>
                <SmallColumn $width="66px">
                    <SmallButton disabled><SmallIcon name="named" />Named</SmallButton>
                    <SmallButton disabled><SmallIcon name="join" />Join</SmallButton>
                    <SmallButton disabled><SmallIcon name="restore" />Restore</SmallButton>
                </SmallColumn>
            </PanelBody>
            <PanelTitle>Viewports</PanelTitle>
        </Panel>
        <Panel $width="196px">
            <PanelBody>
                <Big icon="maps" lines={['Display', 'Maps']} width="66px" />
                <Big icon="layers" lines={['Layer', 'Visibility']} width="66px" />
                <Big icon="grid" lines={['Reference', 'System']} width="60px" disabled low caret="none" />
            </PanelBody>
            <PanelTitle>Map Viewport</PanelTitle>
        </Panel>
        <Panel $width="241px">
            <PanelBody>
                <Big icon="legend" lines={['Legend']} width="78px" />
                <Big icon="north" lines={['North', 'Arrow']} width="80px" />
                <Big icon="scale" lines={['Scale', 'Bar']} width="78px" />
            </PanelBody>
            <PanelTitle>Layout Elements</PanelTitle>
        </Panel>
    </Ribbon>
);

const Pane = () => (
    <TaskPane>
        <PaneTitle>TASK PANE</PaneTitle>
        <BookRow>
            <label htmlFor="book">Map Book:</label>
            <BookSelectBox>
                <PlainSelect id="book"><option>MyMapBook</option></PlainSelect>
                <Chevron />
            </BookSelectBox>
        </BookRow>
        <PaneTools>
            {Object.keys(paneIcons).map(name => (
                <PaneTool key={name}>
                    <svg width="16" height="16" viewBox="0 0 16 16">{paneIcons[name]}</svg>
                    {name}
                </PaneTool>
            ))}
        </PaneTools>
        <TreeBox>
            <Tree>
                {books.map(book => (
                    <li key={book.name}>
                        <TreeHead>
                            <Expander aria-label="Collapse">
                                <svg width="5" height="1" viewBox="0 0 5 1"><path d="M0 0H5V1H0Z" fill="#445" /></svg>
                            </Expander>
                            <BookIcon />
                            {book.name}
                        </TreeHead>
                        <Leaves>
                            {book.maps.map(map => (
                                <Leaf key={map}><MapIcon /><LeafName $selected={map === 'A-3'}>{map}</LeafName></Leaf>
                            ))}
                        </Leaves>
                    </li>
                ))}
            </Tree>
            <Scrollbar>
                <ScrollButton aria-label="Scroll up"><Chevron up /></ScrollButton>
                <Thumb />
                <ScrollButton aria-label="Scroll down"><Chevron up={false} /></ScrollButton>
            </Scrollbar>
        </TreeBox>
    </TaskPane>
);

const Drawing = () => (
    <Canvas>
        <Sheet>
            <SheetMargin>
                <CoordMark width="36" height="60" viewBox="0 0 36 60" fill="none" stroke="#4a6fd0">
                    <path d="M1.500 1V58.500H34.500ZM1.500 53H7V58.500M2 18L4 19M11 17L9 20M24 58L29 48" />
                    <text x="3" y="28" fontSize="12" fill="#4a6fd0" stroke="none">Y</text>
                    <text x="20" y="58" fontSize="12" fill="#4a6fd0" stroke="none">X</text>
                </CoordMark>
                <PaperCorner width="8" height="20" viewBox="0 0 8 20"><path d="M0 0V20H8Z" fill="#c6d8dc" /></PaperCorner>
            </SheetMargin>
            <SheetBody>
                <SheetTop>
                    <Stamp>
                        <svg width="48" height="28" viewBox="0 0 48 28" fill="none" stroke="#1c3010">
                            <path d="M1 0A23 26 0 0 0 47 0" />
                            <path d="M11 0V5H29V0M13 3H28M31 0V8H37V0" />
                            <path d="M11 12a2 2 0 1 1 4 0a2 2 0 1 1 -4 0M17 12a2 2 0 1 1 4 0a2 2 0 1 1 -4 0M23 12a2 2 0 1 1 4 0a2 2 0 1 1 -4 0M29 12a2 2 0 1 1 4 0a2 2 0 1 1 -4 0M11 18V15H15V18M17 18V15H21V18M23 18V15H27V18M29 18V15H33V18" strokeWidth=".7" />
                        </svg>
                        <StampName>Mr. Koley</StampName>
                        <StampRole>Education</StampRole>
                    </Stamp>
                    <Guide />
                    <Guide $far />
                </SheetTop>
                <LegendBand>LEGEND</LegendBand>
                <LegendTable>
                    <tbody>
                        <tr><LegendTitle colSpan={2}>Default</LegendTitle></tr>
                        <LegendRow>
                            <LegendSub colSpan={2}><SubWords><span>West</span><span>Bengal</span><span>Map</span></SubWords></LegendSub>
                        </LegendRow>
                        {legend.map(([name, color], i) => (
                            <LegendRow key={name} $tall={i % 2 === 0}>
                                <SwatchCell><Swatch $color={color} /></SwatchCell>
                                <td>{name}</td>
                            </LegendRow>
                        ))}
                    </tbody>
                </LegendTable>
            </SheetBody>
        </Sheet>
        <NavBar>
            <svg width="19" height="84" viewBox="0 0 19 84" fill="none" stroke="#7e7e7e">
                <circle cx="15" cy="3" r="2" />
                <circle cx="9" cy="19" r="6" /><circle cx="9" cy="19" r="3" /><path d="M13 23H17V27H13Z" />
                <path d="M4 40L2 37Q3 35 6 38L5 33Q7 32 8 36L9 31Q11 31 11 36L14 33Q16 34 13 41Q11 46 6 43Z" />
                <path d="M2 50L14 62M14 50L2 62M2 50H5M2 50V53M14 50H11" /><circle cx="13" cy="59" r="3" />
                <path d="M7 72H11" /><circle cx="15" cy="81" r="2" />
            </svg>
        </NavBar>
    </Canvas>
);

const FontFields = ({ id, font, height, focused }) => (
    <>
        <Field $swatch>
            <FieldLabel htmlFor={`${id}-color`}>Color:</FieldLabel>
            <ColorButton id={`${id}-color`} $color="#050505" />
        </Field>
        <Field>
            <FieldLabel htmlFor={`${id}-font`}>Font:</FieldLabel>
            <Combo>
                <PlainSelect id={`${id}-font`}><option>{font}</option></PlainSelect>
                <Chevron size={8} />
            </Combo>
        </Field>
        <Field>
            <FieldLabel htmlFor={`${id}-height`}>Text height:</FieldLabel>
            <HeightInput id={`${id}-height`} defaultValue={height} $focused={focused} />
            <StyleButton $first aria-label="Bold">B</StyleButton>
            <StyleButton aria-label="Italic">I</StyleButton>
        </Field>
    </>
);

const LegendStyle = () => (
    <Dialog role="dialog" aria-label="Legend Style">
        <DialogTitle>
            <Logo size={15} boxed />
            Legend Style
            <CloseButton aria-label="Close">
                <svg width="13" height="13" viewBox="0 0 13 13" stroke="#555"><path d="M1 1L12 12M12 1L1 12" /></svg>
            </CloseButton>
        </DialogTitle>
        <DialogBody>
            <Section>
                <SectionTitle>Background</SectionTitle>
                <Field $swatch>
                    <FieldLabel htmlFor="bg-color">Color:</FieldLabel>
                    <ColorButton id="bg-color" $color="#fff" />
                </Field>
            </Section>
            <Section>
                <SectionTitle>Title</SectionTitle>
                <FontFields id="title" font="Arial" height="1" focused />
            </Section>
            <Section>
                <SectionTitle>Items</SectionTitle>
                <FontFields id="items" font="AcadEref" height="3.375" />
            </Section>
            <Section>
                <SectionTitle>Table</SectionTitle>
                <Field>
                    <FieldLabel htmlFor="transparency">Transparency:</FieldLabel>
                    <Range id="transparency" type="range" defaultValue={0} />
                    <Combo $small>
                        <PlainSelect aria-label="Transparency value"><option>0</option></PlainSelect>
                        <Chevron size={8} />
                    </Combo>
                </Field>
            </Section>
            <Actions>
                <ActionButton>Reset</ActionButton>
                <ActionButton $primary>OK</ActionButton>
                <ActionButton>Cancel</ActionButton>
            </Actions>
        </DialogBody>
    </Dialog>
);

const Status = () => (
    <BottomBar>
        <LayoutTabs>
            <LayoutTab>Model</LayoutTab>
            <LayoutTab>Layout2</LayoutTab>
            <LayoutTab $active>MyMapBook-A-3</LayoutTab>
            <LayoutTab>MyMapBook-A-4</LayoutTab>
            <LayoutTab>MyMapBook-A-5</LayoutTab>
            <LayoutTab aria-label="New layout">
                <svg width="9" height="9" viewBox="0 0 9 9" stroke="#ccc" strokeWidth="2"><path d="M4.500 0V9M0 4.500H9" /></svg>
            </LayoutTab>
            <MoreTabs aria-label="More layouts">
                <svg width="9" height="13" viewBox="0 0 9 13" fill="none" stroke="#ccc" strokeWidth="2"><path d="M1 1L4.500 4L8 1M1 7L4.500 10L8 7" /></svg>
            </MoreTabs>
        </LayoutTabs>
        <Coordinates $width="212px">4670834.369, 4054694.419, 0.000</Coordinates>
        <StatusCell $width="44px" $bright>PAPER</StatusCell>
        <StatusCell $width="24px"><StatusIcon name="infer" /></StatusCell>
        <StatusCell $width="100px">
            <StatusIcon name="ortho" /><StatusIcon name="polar" /><Caret color="#fff" size={7} /><StatusIcon name="iso" /><Caret color="#fff" size={7} />
        </StatusCell>
        <StatusCell $width="24px"><StatusIcon name="track" /></StatusCell>
        <StatusCell $width="75px"><StatusIcon name="snap" /><StatusIcon name="person" /><StatusIcon name="bolt" /></StatusCell>
        <StatusCell $width="40px"><button aria-label="Settings"><Gear color="#bdbdbd" hole="#505050" /></button><Caret color="#fff" size={7} /></StatusCell>
        <StatusCell $width="24px"><StatusIcon name="plus" /></StatusCell>
        <StatusCell $width="26px"><StatusIcon name="shapes" /></StatusCell>
        <StatusCell $width="26px">
            <button aria-label="Performance">
                <svg width="18" height="18" viewBox="0 0 18 18"><circle cx="9" cy="9" r="8" fill="#0a63b3" stroke="#2588d8" /><path d="M9 11L12 8" stroke="#57b2ef" strokeWidth="1.500" /></svg>
            </button>
        </StatusCell>
        <StatusCell $width="52px"><StatusIcon name="full" /><StatusIcon name="menu" /></StatusCell>
    </BottomBar>
);

export default function App () {
    return (
        <Screen>
            <GlobalStyle />
            <Header />

            <MenuBar>
                {menus.map(([name, gap]) => <MenuItem key={name} $gap={gap}>{name}</MenuItem>)}
                <DocButtons>
                    <svg width="28" height="9" viewBox="0 0 28 9" fill="none" stroke="#1d1d1d">
                        <path d="M0 7.500H6M10.500 3.500H15.500V8.500H10.500ZM12.500 3V.5H17.500V6.500H16" /><path d="M23 2L27 7M27 2L23 7" strokeWidth="1.500" />
                    </svg>
                </DocButtons>
            </MenuBar>

            <TabBar>
                {tabs.map(name => <RibbonTab key={name}>{name}</RibbonTab>)}
                <RibbonTab $tone="#45748c">Layout</RibbonTab>
                <RibbonTab $tone="#45748c">Geolocation</RibbonTab>
                <RibbonTab $tone="#5f8d49">Layout Tools</RibbonTab>
                <RibbonToggle aria-label="Minimize ribbon">
                    <svg width="13" height="8" viewBox="0 0 13 8"><path d="M1 0H12L13 1V7L12 8H1L0 7V1Z" fill="#ccc" /><path d="M4 6L6.500 3L9 6Z" fill="#444" /></svg>
                    <Caret size={5} color="#bbb" />
                </RibbonToggle>
            </TabBar>

            <RibbonArea />

            <Main>
                <Pane />
                <SideTabs>
                    <SideTab>Display Manager</SideTab>
                    <SideTab>Map Explorer</SideTab>
                    <SideTab $active>Map Book</SideTab>
                    <SideTab>Survey</SideTab>
                </SideTabs>
                <Work>
                    <CanvasRow>
                        <Drawing />
                        <Strip />
                    </CanvasRow>
                    <CommandWindow>
                        <CommandSide>
                            <svg width="16" height="2" viewBox="0 0 16 2"><path d="M0 1H16" stroke="#bbb" strokeDasharray="1 2" /></svg>
                            <button aria-label="Close command line">
                                <svg width="9" height="9" viewBox="0 0 9 9" stroke="#fff" strokeWidth="2"><path d="M1 1L8 8M8 1L1 8" /></svg>
                            </button>
                            <button aria-label="Customize">
                                <svg width="14" height="14" viewBox="0 0 14 14">
                                    <path d="M5 5L12 12" stroke="#e5e5e5" strokeWidth="3" strokeLinecap="round" />
                                    <path d="M4 1V4L1 4A3 3 0 1 0 4 1Z" fill="none" stroke="#e5e5e5" strokeWidth="2" />
                                </svg>
                            </button>
                        </CommandSide>
                        <CommandBody>
                            <History>
                                <div>{'Command:  Enter the print layout object\'s ID:'}</div>
                                <div>{'Command:  Enter the print layout object\'s ID:'}</div>
                            </History>
                            <Prompt>
                                <svg width="16" height="14" viewBox="0 0 16 14" fill="none"><path d="M.5.5H15.500V13.500H.5Z" fill="#dfe5ea" stroke="#9aa" /><path d="M3 4L6 7L3 10M8 10H12" stroke="#566" strokeWidth="1.500" /></svg>
                                <Caret size={6} color="#888" />
                                <PromptInput aria-label="Command" defaultValue="MAPEDITLEGENDSTYLE_ARG" />
                            </Prompt>
                        </CommandBody>
                    </CommandWindow>
                </Work>
            </Main>

            <Status />

            <LegendStyle />
            <Pointer>
                <svg width="13" height="20" viewBox="0 0 13 20"><path d="M.5.5V16L4 12.500L7 19L9.500 18L6.500 11.500H12Z" fill="#0b3d12" stroke="#e8ffe8" /></svg>
            </Pointer>
        </Screen>
    );
}
